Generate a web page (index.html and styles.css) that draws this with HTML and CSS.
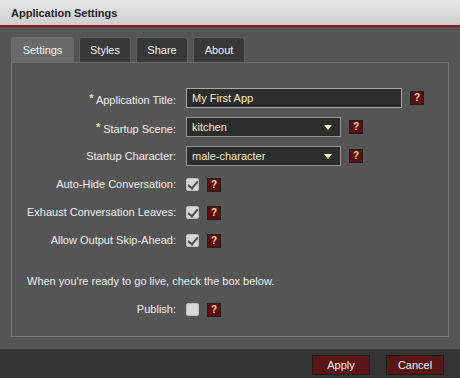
FILE: index.html
```html
<!DOCTYPE html>
<html>
<head>
<meta charset="utf-8">
<link rel="stylesheet" href="styles.css">
</head>
<body>
<div class="dialog">
  <div class="titlebar">Application Settings</div>
  <div class="main">
    <div class="tabs">
      <div class="tab active">Settings</div>
      <div class="tab">Styles</div>
      <div class="tab">Share</div>
      <div class="tab">About</div>
    </div>
    <div class="panel">
      <div class="form">
        <label class="lbl"><span class="req">*</span> Application Title:</label>
        <div class="ctl"><div class="input wide">My First App</div><span class="help">?</span></div>

        <label class="lbl"><span class="req">*</span> Startup Scene:</label>
        <div class="ctl"><div class="input select">kitchen<span class="arrow"></span></div><span class="help">?</span></div>

        <label class="lbl">Startup Character:</label>
        <div class="ctl"><div class="input select">male-character<span class="arrow"></span></div><span class="help">?</span></div>

        <label class="lbl chk-row">Auto-Hide Conversation:</label>
        <div class="ctl chk-row"><span class="check on"></span><span class="help">?</span></div>

        <label class="lbl chk-row">Exhaust Conversation Leaves:</label>
        <div class="ctl chk-row"><span class="check on"></span><span class="help">?</span></div>

        <label class="lbl chk-row">Allow Output Skip-Ahead:</label>
        <div class="ctl chk-row"><span class="check on"></span><span class="help">?</span></div>
      </div>
      <p class="note">When you're ready to go live, check the box below.</p>
      <div class="form publish">
        <label class="lbl chk-row">Publish:</label>
        <div class="ctl chk-row"><span class="check"></span><span class="help">?</span></div>
      </div>
    </div>
  </div>
  <div class="footer">
    <button class="btn">Apply</button>
    <button class="btn">Cancel</button>
  </div>
</div>
</body>
</html>
```
FILE: styles.css
```css
* { box-sizing: border-box; }
html, body { margin: 0; padding: 0; }
body {
  width: 460px;
  height: 378px;
  background: #555555;
  font-family: "Liberation Sans", Arial, sans-serif;
  font-size: 11px;
  color: #eeeeee;
  overflow: hidden;
}
.dialog { display: flex; flex-direction: column; height: 378px; }
.titlebar {
  height: 27px;
  background: linear-gradient(#e8e8e8, #cdcdcd);
  border-bottom: 2px solid #a30e0e;
  color: #222;
  font-weight: bold;
  font-size: 11px;
  padding: 7px 0 0 11px;
  flex: none;
}
.main { flex: 1; padding: 10px 11px 12px 11px; display: flex; flex-direction: column; }
.tabs { display: flex; gap: 5px; height: 25px; flex: none; }
.tab {
  background: #383838;
  border: 1px solid #5f5f5f;
  border-bottom: none;
  border-radius: 3px 3px 0 0;
  color: #f2f2f2;
  height: 25px;
  line-height: 24px;
  text-align: center;
}
.tab.active { background: #6a6a6a; border-color: #6a6a6a; width: 63px; }
.tab:nth-child(2) { width: 52px; }
.tab:nth-child(3) { width: 52px; }
.tab:nth-child(4) { width: 52px; }
.panel {
  flex: 1;
  border: 1px solid #7a7a7a;
  border-top-color: #6a6a6a;
  padding: 25px 15px 0 15px;
}
.form {
  display: grid;
  grid-template-columns: 149px 1fr;
  column-gap: 10px;
  row-gap: 9px;
  align-items: center;
}
.lbl { text-align: right; height: 20px; line-height: 20px; white-space: nowrap; }
.req { color: #ece49a; font-weight: bold; vertical-align: 2px; }
.ctl { display: flex; align-items: center; height: 20px; gap: 8px; }
.chk-row { height: 19px; line-height: 19px; }
.input {
  height: 20px;
  background: #2c2c2c;
  border: 1px solid #a8a8a8;
  color: #f2ecc8;
  font-size: 11px;
  line-height: 18px;
  padding-left: 5px;
  position: relative;
}
.input.wide { width: 216px; }
.input.select { width: 155px; border-color: #979797; }
.arrow {
  position: absolute;
  right: 8px;
  top: 7px;
  width: 0; height: 0;
  border-left: 4px solid transparent;
  border-right: 4px solid transparent;
  border-top: 5px solid #f4eec8;
}
.help {
  display: inline-flex;
  align-items: center;
  justify-content: center;
  width: 14px;
  height: 14px;
  background: #5c0e0e;
  border: 1px solid #1e1e1e;
  color: #f0dca8;
  font-size: 10px;
  font-weight: bold;
  line-height: 1;
}
.check {
  width: 13px;
  height: 13px;
  background: #d8d8d8;
  border: 1px solid #bdbdbd;
  border-radius: 2px;
  position: relative;
}
.check.on::after {
  content: "";
  position: absolute;
  left: 3px;
  top: 0px;
  width: 4px;
  height: 8px;
  border-right: 2px solid #4a4a4a;
  border-bottom: 2px solid #4a4a4a;
  transform: rotate(40deg);
}
.note { margin: 24px 0 12px 0; line-height: 14px; color: #eeeeee; }
.footer {
  height: 29px;
  flex: none;
  background: #333333;
  border-top: 1px solid #3c3c3c;
  display: flex;
  justify-content: flex-end;
  align-items: center;
  gap: 16px;
  padding: 0 16px 0 0;
}
.btn {
  font-family: "Liberation Sans", Arial, sans-serif;
  font-size: 11px;
  color: #f2f2f2;
  background: #5a1515;
  border: 1px solid #1c1c1c;
  width: 58px;
  height: 20px;
  padding: 0;
  margin-top: 1px;
}
```
